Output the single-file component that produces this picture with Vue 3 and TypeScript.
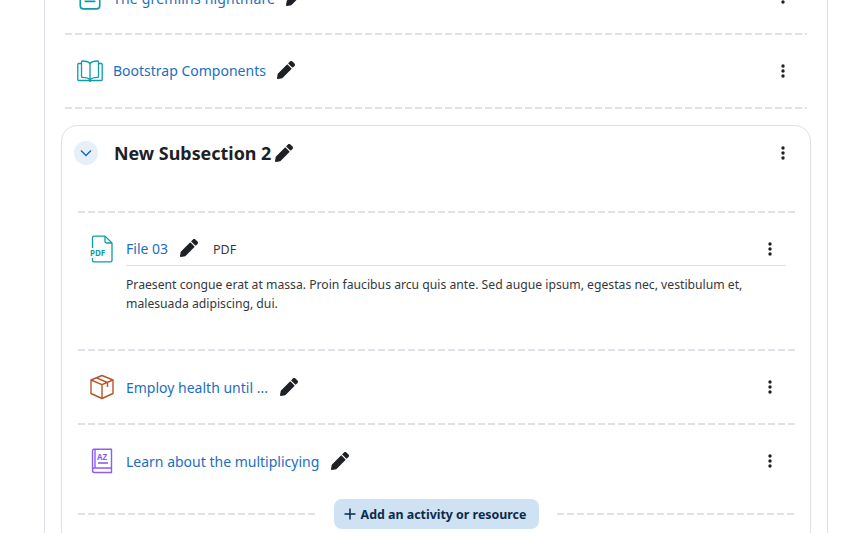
<script setup lang="ts">
const pencil =
  'M497.900 142.100l-46.100 46.100c-4.700 4.700-12.300 4.700-17 0l-111-111c-4.700-4.700-4.700-12.300 0-17l46.100-46.100c18.700-18.700 49.100-18.700 67.900 0l60.100 60.100c18.800 18.700 18.800 49.100 0 67.900zM284.200 99.800L21.600 362.400.4 483.900c-2.900 16.400 11.400 30.600 27.800 27.800l121.500-21.300 262.600-262.600c4.700-4.700 4.700-12.300 0-17l-111-111c-4.800-4.700-12.400-4.700-17.100 0z'
</script>

<template>
  <div class="page">
    <div class="course">
      <!-- first activity is scrolled partly out of view -->
      <div class="row top-row">
        <svg class="icon" viewBox="0 0 24 24" fill="none" stroke="#0f9aa8" stroke-width="1.5">
          <rect x="3" y="1" width="18" height="22" rx="3" />
          <path d="M7 8h10M7 12h10M7 16h10" />
        </svg>
        <a class="link">The gremlins nightmare</a>
        <svg class="pen" viewBox="0 0 512 512"><path :d="pencil" /></svg>
        <svg class="dots" viewBox="0 0 4 14"><circle cx="2" cy="2" r="1.7" /><circle cx="2" cy="7" r="1.7" /><circle cx="2" cy="12" r="1.7" /></svg>
      </div>
      <div class="dash"></div>
      <div class="row book-row">
        <svg class="icon" viewBox="0 0 26 22" fill="none" stroke="#0f9aa8" stroke-width="1.3" stroke-linejoin="round">
          <path d="M13 3.500C11.500 1.800 9 1 5.500 1c-.6 0-1 .4-1 1v14.500c0 .5.4.9 1 .9 3.500 0 6 .7 7.500 2.300 1.500-1.600 4-2.300 7.500-2.300.6 0 1-.4 1-.9V2c0-.6-.4-1-1-1C17 1 14.500 1.800 13 3.500z" />
          <path d="M13 3.500v16.200" />
          <path d="M4.500 3.500H1.700c-.5 0-.9.4-.9.9v15.200c0 .5.4.9.9.9h9.800c.5 0 1 .3 1.500.8.500-.5 1-.8 1.500-.8h9.800c.5 0 .9-.4.9-.9V4.400c0-.5-.4-.9-.9-.9h-2.800" />
        </svg>
        <a class="link">Bootstrap Components</a>
        <svg class="pen" viewBox="0 0 512 512"><path :d="pencil" /></svg>
        <svg class="dots" viewBox="0 0 4 14"><circle cx="2" cy="2" r="1.7" /><circle cx="2" cy="7" r="1.7" /><circle cx="2" cy="12" r="1.7" /></svg>
      </div>
      <div class="dash"></div>

      <section class="subsection">
        <header class="sub-head">
          <span class="toggle">
            <svg viewBox="0 0 12 8" fill="none" stroke="#0f6cbf" stroke-width="1.400">
              <path d="M1 1.500l5 5 5-5" />
            </svg>
          </span>
          <h3>New Subsection 2</h3>
          <svg class="pen" viewBox="0 0 512 512"><path :d="pencil" /></svg>
          <svg class="dots" viewBox="0 0 4 14"><circle cx="2" cy="2" r="1.700" /><circle cx="2" cy="7" r="1.700" /><circle cx="2" cy="12" r="1.700" /></svg>
        </header>

        <div class="dash"></div>
        <div class="file">
          <div class="file-head">
            <svg class="icon" viewBox="0 0 24 28" fill="none" stroke="#0f9aa8" stroke-width="1.300" stroke-linejoin="round">
              <path d="M3.500 13V2.500c0-.8.600-1.400 1.400-1.400H16L23 8v17.500c0 .8-.6 1.400-1.400 1.400H4.900c-.8 0-1.400-.6-1.400-1.400V23" />
              <path d="M16 1.100V6.500c0 .8.600 1.500 1.400 1.500H23" />
              <text x="1" y="21" class="pdf-mark">PDF</text>
            </svg>
            <a class="link">File 03</a>
            <svg class="pen" viewBox="0 0 512 512"><path :d="pencil" /></svg>
            <span class="kind">PDF</span>
            <svg class="dots" viewBox="0 0 4 14"><circle cx="2" cy="2" r="1.700" /><circle cx="2" cy="7" r="1.700" /><circle cx="2" cy="12" r="1.700" /></svg>
          </div>
          <p>Praesent congue erat at massa. Proin faucibus arcu quis ante. Sed augue ipsum, egestas nec, vestibulum et, malesuada adipiscing, dui.</p>
        </div>

        <div class="dash"></div>
        <div class="row inner-row">
          <svg class="icon" viewBox="0 0 26 26" fill="none" stroke="#b8542a" stroke-width="1.400" stroke-linejoin="round">
            <path d="M13 1.500l11 4.500v13.500L13 24.500 2 19.500V6L13 1.500z" />
            <path d="M2 6l11 4.700L24 6M13 10.700v13.800M7.500 3.800l11 4.700v4.500" />
          </svg>
          <a class="link">Employ health until ...</a>
          <svg class="pen" viewBox="0 0 512 512"><path :d="pencil" /></svg>
          <svg class="dots" viewBox="0 0 4 14"><circle cx="2" cy="2" r="1.700" /><circle cx="2" cy="7" r="1.700" /><circle cx="2" cy="12" r="1.700" /></svg>
        </div>
        <div class="dash"></div>
        <div class="row inner-row">
          <svg class="icon" viewBox="0 0 26 26" fill="none" stroke="#8b5cf6" stroke-width="1.400" stroke-linejoin="round">
            <path d="M3.500 20.500V3c0-1 .7-1.700 1.700-1.700H22.500V20H5.200C4.200 20 3.500 20.700 3.500 22s.7 2.500 1.700 2.500h17.300V20" />
            <path d="M6 1.300V20" />
            <text x="8" y="11.500" class="glossary-mark">AZ</text>
            <path d="M9 15h10" stroke-width="1.600" />
          </svg>
          <a class="link">Learn about the multiplicying</a>
          <svg class="pen" viewBox="0 0 512 512"><path :d="pencil" /></svg>
          <svg class="dots" viewBox="0 0 4 14"><circle cx="2" cy="2" r="1.700" /><circle cx="2" cy="7" r="1.700" /><circle cx="2" cy="12" r="1.700" /></svg>
        </div>

        <div class="add-bar">
          <div class="dash"></div>
          <button>
            <svg viewBox="0 0 12 12" fill="none" stroke="#0c2a4d" stroke-width="1.500"><path d="M6 .5v11M.5 6h11" /></svg>
            Add an activity or resource
          </button>
          <div class="dash"></div>
        </div>
      </section>
    </div>
  </div>
</template>

<style scoped>
.page {
  height: 533px;
  overflow: hidden;
  font-family: "Noto Sans", "Open Sans", sans-serif;
  color: #1d2125;
  background: #fff;
}
.course {
  width: 784px;
  box-sizing: border-box;
  height: 600px;
  margin: -39px 0 0 44px;
  padding: 0 20px;
  border-left: 1px solid #dee2e6;
  border-right: 1px solid #dee2e6;
}
.dash {
  height: 2px;
  background: repeating-linear-gradient(to right, #dee2e6 0 7px, transparent 7px 10px);
}
.row {
  display: flex;
  align-items: center;
}
.top-row {
  height: 72px;
  padding-left: 12px;
}
.top-row .link {
  letter-spacing: 0.18px;
  margin-top: 2px;
}
.book-row {
  height: 72px;
  padding-left: 12px;
}
.book-row .link,
.book-row .pen {
  margin-bottom: 2px;
}
.link {
  color: #1a6fc0;
  font-size: 14px;
  white-space: nowrap;
}
.icon {
  width: 26px;
  height: 26px;
  flex: none;
  margin-right: 10px;
}
.pen {
  width: 18px;
  height: 18px;
  margin-left: 11px;
  fill: #1d2125;
  flex: none;
}
.dots {
  width: 4px;
  height: 14px;
  margin-left: auto;
  margin-right: 22px;
  fill: #1d2125;
  flex: none;
}
.subsection {
  margin: 16px -4px 0;
  padding: 0 15px 0 16px;
  height: 600px;
  border: 1px solid #dee2e6;
  border-radius: 16px;
}
.sub-head {
  display: flex;
  align-items: center;
  height: 53px;
  margin-left: -4px;
  margin-bottom: 32px;
}
.toggle {
  width: 24px;
  height: 24px;
  border-radius: 50%;
  background: #e7eff8;
  display: flex;
  align-items: center;
  justify-content: center;
  margin-right: 16px;
}
.toggle svg {
  width: 12px;
  height: 8px;
}
h3 {
  margin: 0;
  font-size: 17.900px;
  font-weight: 700;
  white-space: nowrap;
}
.sub-head .pen {
  margin-left: 4px;
}
.sub-head .dots {
  margin-right: 10px;
}
.file {
  height: 136px;
  padding-left: 11px;
}
.file-head {
  display: flex;
  align-items: center;
  height: 53px;
  padding-top: 19px;
  box-sizing: border-box;
  position: relative;
}
.file-head::after {
  content: "";
  position: absolute;
  left: 37px;
  right: 9px;
  bottom: 0;
  border-bottom: 1px solid #dee2e6;
}
.file-head .link,
.file-head .pen {
  margin-bottom: 2px;
}
.file-head .pen,
.inner-row .pen {
  margin-left: 12px;
}
.file-head .dots,
.inner-row .dots {
  margin-right: 23px;
}
.file-head .icon {
  width: 24px;
  height: 28px;
  margin-right: 13px;
}
.kind {
  font-size: 12.500px;
  margin-left: 15px;
  color: #33383d;
}
.pdf-mark {
  font: 700 8px "Noto Sans", sans-serif;
  fill: #0f9aa8;
  stroke: none;
}
.glossary-mark {
  font: 700 8px "Noto Sans", sans-serif;
  fill: #8b5cf6;
  stroke: none;
}
p {
  margin: 9px 40px 0 37px;
  font-size: 12.200px;
  line-height: 19px;
  color: #33383d;
}
.inner-row {
  height: 72px;
  padding-left: 11px;
}
.inner-row .icon {
  margin-right: 11px;
}
.add-bar {
  display: flex;
  align-items: center;
  gap: 18px;
  height: 34px;
}
.add-bar .dash {
  flex: 1;
}
button {
  display: flex;
  align-items: center;
  gap: 5px;
  height: 30px;
  padding: 0 13px 0 10px;
  border: 0;
  border-radius: 8px;
  background: #cfe2f3;
  color: #0c2a4d;
  font: 700 12.400px "Noto Sans", sans-serif;
  white-space: nowrap;
}
button svg {
  width: 12px;
  height: 12px;
}
</style>
